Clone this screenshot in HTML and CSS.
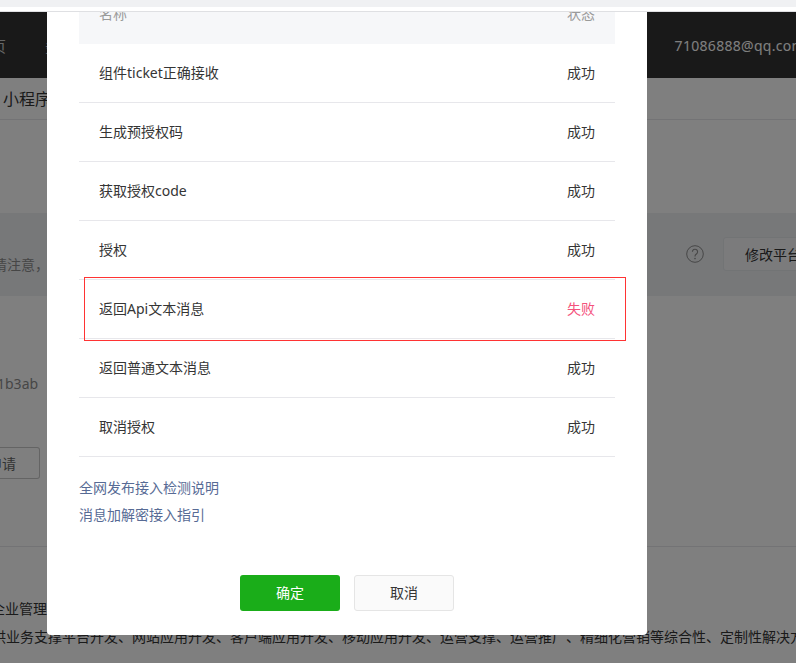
FILE: index.html
```html
<!DOCTYPE html>
<html lang="zh-CN">
<head>
<meta charset="utf-8">
<title>全网发布接入检测</title>
<link rel="stylesheet" href="styles.css">
</head>
<body>
<div class="browser-bar"><div class="browser-strip"></div></div>
<div class="viewport">
  <div class="page">
    <header class="topbar">
      <nav class="topnav"><span class="nav-a">页</span><span class="nav-b">务</span></nav>
      <span class="account">71086888@qq.com</span>
    </header>
    <div class="crumbs"><span>小程序</span></div>
    <section class="notice">
      <span class="notice-text">请注意，</span>
      <div class="notice-actions">
        <svg class="help" viewBox="0 0 18 18" aria-hidden="true"><circle cx="9" cy="9" r="8.3" fill="none" stroke="currentColor" stroke-width="1"/><path d="M6.4 6.8a2.6 2.6 0 1 1 4 2.2c-.9.6-1.4 1-1.4 2.4" fill="none" stroke="currentColor" stroke-width="1.1"/><circle cx="9" cy="13.6" r=".8" fill="currentColor"/></svg>
        <span class="ghost-btn">修改平台信息</span>
      </div>
    </section>
    <section class="details">
      <p class="hash">1b3ab</p>
      <span class="apply-btn">申请</span>
    </section>
    <section class="about">
      <p class="about-title">企业管理</p>
      <p class="about-text">供业务支撑平台开发、网站应用开发、客户端应用开发、移动应用开发、运营支撑、运营推广、精细化营销等综合性、定制性解决方案</p>
    </section>
  </div>
  <div class="mask"></div>
  <div class="dialog" role="dialog">
    <div class="result-table">
      <div class="result-head"><span>名称</span><span>状态</span></div>
      <div class="result-row"><span>组件ticket正确接收</span><span>成功</span></div>
      <div class="result-row"><span>生成预授权码</span><span>成功</span></div>
      <div class="result-row"><span>获取授权code</span><span>成功</span></div>
      <div class="result-row"><span>授权</span><span>成功</span></div>
      <div class="result-row"><span>返回Api文本消息</span><span class="failed">失败</span></div>
      <div class="result-row"><span>返回普通文本消息</span><span>成功</span></div>
      <div class="result-row"><span>取消授权</span><span>成功</span></div>
    </div>
    <div class="links">
      <a href="#">全网发布接入检测说明</a>
      <a href="#">消息加解密接入指引</a>
    </div>
    <div class="actions">
      <a class="btn btn-primary" href="#">确定</a>
      <a class="btn btn-default" href="#">取消</a>
    </div>
  </div>
  <div class="annotation"></div>
</div>
</body>
</html>
```
FILE: styles.css
```css
* { box-sizing: border-box; }
html, body { margin: 0; height: 100%; overflow: hidden; }
body {
  width: 796px;
  height: 663px;
  display: flex;
  flex-direction: column;
  background: #fff;
  font-family: "Noto Sans", "Noto Sans CJK SC", sans-serif;
  font-size: 14px;
  color: #353535;
}
p { margin: 0; }
a { text-decoration: none; }

.browser-bar {
  height: 12px;
  flex: none;
  background: #fff;
  border-bottom: 1px solid #dfe0e3;
}
.browser-strip { height: 7px; background: #f0f1f3; }

.viewport { position: relative; flex: 1; overflow: hidden; }
.page { height: 651px; background: #fff; display: flex; flex-direction: column; }

.topbar {
  height: 66px;
  flex: none;
  background: #333;
  display: flex;
  align-items: center;
  color: #fff;
  white-space: nowrap;
}
.topnav { display: flex; gap: 39px; margin-left: -9px; font-size: 15px; color: #ccc; }
.account { margin-left: auto; margin-right: -9px; font-size: 14px; letter-spacing: .3px; color: #fff; }

.crumbs {
  height: 42px;
  flex: none;
  padding: 0 0 2px 3px;
  display: flex;
  align-items: center;
  border-bottom: 1px solid #e7e7eb;
  font-size: 16px;
  color: #353535;
}

.notice {
  margin-top: 93px;
  height: 83px;
  flex: none;
  background: #eef0f3;
  display: flex;
  align-items: center;
  justify-content: space-between;
  overflow: hidden;
}
.notice-text { margin-left: -7px; margin-top: 18px; color: #8d8d8d; font-size: 14px; }
.notice-actions { display: flex; align-items: center; gap: 19px; margin-right: -55px; margin-top: -2px; }
.help { width: 18px; height: 18px; color: #8d8d8d; }
.ghost-btn {
  height: 34px;
  width: 128px;
  display: flex;
  align-items: center;
  justify-content: center;
  background: #f6f7f9;
  border: 1px solid #e4e8eb;
  border-radius: 3px;
  white-space: nowrap;
  color: #353535;
}

.details { flex: none; height: 250px; overflow: hidden; }
.hash { margin-top: 78px; margin-left: -3px; font-size: 14px; line-height: 20px; color: #8d8d8d; }
.apply-btn {
  display: flex;
  align-items: center;
  justify-content: flex-end;
  width: 40px;
  height: 32px;
  margin-top: 53px;
  padding-right: 23px;
  border: 1px solid #c9c9c9;
  border-left: 0;
  border-radius: 0 3px 3px 0;
  color: #666;
  white-space: nowrap;
}

.about { flex: 1; border-top: 1px solid #e7e7eb; overflow: hidden; }
.about-title { margin-top: 51px; margin-left: -9px; line-height: 22px; font-size: 14px; }
.about-text { margin-top: 7px; margin-left: -8px; line-height: 20px; white-space: nowrap; }

.mask { position: absolute; inset: 0; background: rgba(0, 0, 0, .5); }

.dialog {
  position: absolute;
  left: 47px;
  top: 0;
  width: 600px;
  height: 623px;
  padding: 0 32px;
  background: #fff;
  border-radius: 0 0 4px 4px;
  overflow: hidden;
}

.result-table { margin-top: -28px; }
.result-head, .result-row {
  display: flex;
  justify-content: space-between;
  align-items: center;
  padding: 0 20px 2px;
}
.result-head { height: 60px; background: #f6f7f9; color: #9a9a9a; }
.result-row { height: 59px; border-bottom: 1px solid #e7e7eb; color: #353535; }
.failed { color: #f4527c; }

.links { margin-top: 21px; display: flex; flex-direction: column; gap: 7px; }
.links a { line-height: 20px; color: #576b95; }

.actions { margin-top: 50px; display: flex; justify-content: center; gap: 14px; }
.btn {
  width: 100px;
  height: 36px;
  padding-bottom: 2px;
  display: flex;
  align-items: center;
  justify-content: center;
  border-radius: 3px;
  font-size: 14px;
}
.btn-primary { background: #1aad19; color: #fff; }
.btn-default { background: #fafafa; border: 1px solid #e5e5e5; color: #353535; }

.annotation {
  position: absolute;
  left: 84px;
  top: 265px;
  width: 542px;
  height: 64px;
  border: 1px solid #f33;
}
```
